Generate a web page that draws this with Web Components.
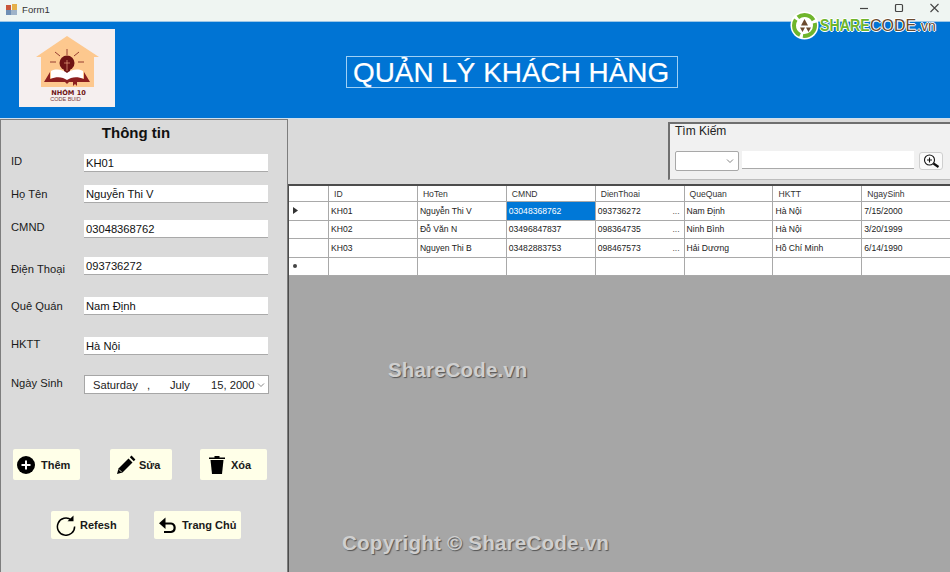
<!DOCTYPE html>
<html lang="vi">
<head>
<meta charset="utf-8">
<title>Form1</title>
<style>
  html, body { margin: 0; padding: 0; height: 572px; overflow: hidden; background: #dadada; }
  body { font-family: "Liberation Sans", Arial, sans-serif; color: #111; }
</style>
</head>
<body>
<app-window></app-window>
<script>
class WinTitlebar extends HTMLElement {
    constructor(){
        super()
        this.attachShadow({ mode: "open" })
    }
    connectedCallback(){
        this.shadowRoot.innerHTML = `
            <style>
            :host { display: flex; align-items: center; height: 22px; background: #eff5f2; border-bottom: 1px solid #9cc6e6; box-sizing: border-box; padding: 0 0 3px 6px; }
            .name { font-size: 9.5px; color: #333; margin-left: 5px; letter-spacing: .1px; }
            .ctl { margin-left: auto; display: flex; padding-right: 9px; gap: 23px; }
            svg { display: block; }
            </style>
            <svg width="11" height="11" viewBox="0 0 11 11">
              <rect x="0" y="1" width="5" height="5" fill="#c9563a"/>
              <rect x="6" y="0" width="5" height="6" fill="#e5b04a"/>
              <rect x="0" y="6" width="5" height="5" fill="#6f8fb5"/>
              <rect x="5" y="6" width="6" height="5" fill="#9fb3c9"/>
            </svg>
            <span class="name">Form1</span>
            <div class="ctl">
              <svg width="12" height="12" viewBox="0 0 12 12"><path d="M1 5.500h8" stroke="#444" stroke-width="1.200"/></svg>
              <svg width="12" height="12" viewBox="0 0 12 12"><rect x="1.500" y="1.500" width="7" height="7" rx="1" fill="none" stroke="#444" stroke-width="1.200"/></svg>
              <svg width="12" height="12" viewBox="0 0 12 12"><path d="M1.500 1L9.500 9M9.500 1L1.500 9" stroke="#444" stroke-width="1.100"/></svg>
            </div>
        `
    }
}

class AppHeader extends HTMLElement {
    constructor(){
        super()
        this.attachShadow({ mode: "open" })
    }
    connectedCallback(){
        this.shadowRoot.innerHTML = `
            <style>
            :host { display: flex; align-items: flex-start; height: 97px; background: #0074d4; border-bottom: 1px solid #cfe0ee; box-sizing: border-box; padding: 7px 0 0 19px; }
            .logo { width: 96px; height: 78px; background: #f5efef; position: relative; flex: none; }
            .logo svg { display: block; }
            .nhom, .code { position: absolute; left: 0; right: 0; text-align: center; white-space: nowrap; }
            .nhom { top: 60px; left: 3px; font: 700 6.600px/8px "DejaVu Sans", sans-serif; color: #6e1414; }
            .code { top: 67px; left: -3px; font: 5.500px/7px "Liberation Sans", sans-serif; color: #7c3a3a; }
            h1 { margin: 27px 0 0 231px; padding: 0 8px 0 6px; height: 32px; box-sizing: border-box; border: 1px solid #9fd0f5; font: 400 27.900px/31px "Liberation Sans", sans-serif; color: #fff; white-space: nowrap; -webkit-text-stroke: .2px #fff; }
            </style>
            <div class="logo">
              <svg width="96" height="78" viewBox="0 0 96 78">
                <path d="M17 28L48 7L80 28H75V58H22V28Z" fill="#fdc88e"/>
                <g stroke="#7b1a1a" stroke-width=".8">
                  <path d="M48 20v6M36 23l5 4M60 23l-5 4M31 33h6M59 33h6"/>
                </g>
                <circle cx="48" cy="34" r="7.500" fill="#6e1414"/>
                <rect x="45" y="40" width="6" height="5" fill="#6e1414"/>
                <path d="M48 31v11M45 34h6" stroke="#e8a080" stroke-width=".7"/>
                <path d="M32 42C38 39 44 41 48 44C52 41 58 39 64 42V51H32Z" fill="#fff"/>
                <path d="M31 43L25 53H46L48 55L50 53H71L65 43V50C58 47 52 48 48 51C44 48 38 47 31 50Z" fill="#8c1f1f"/>
                <path d="M54 49h4v8l-2-2l-2 2Z" fill="#8c1f1f"/>
              </svg>
              <span class="nhom">NHÓM 10</span>
              <span class="code">CODE BUID</span>
            </div>
            <h1>QUẢN LÝ KHÁCH HÀNG</h1>
        `
    }
}

class FormField extends HTMLElement {
    constructor(){
        super()
        this.attachShadow({ mode: "open" })
    }
    connectedCallback(){
        const gap = this.getAttribute("gap") || 0
        const lift = this.getAttribute("lift") || 0
        this.shadowRoot.innerHTML = `
            <style>
            :host { display: flex; align-items: center; height: 18px; margin-top: ${gap}px; padding-left: 11px; font-size: 11.200px; }
            .lbl { width: 73px; flex: none; color: #1a1a1a; transform: translateY(${lift}px); }
            .box { width: 184px; height: 18px; box-sizing: border-box; background: #fff; border-bottom: 1px solid #a9a9a9; padding: 3px 0 0 2px; font-size: 11.200px; color: #111; overflow: hidden; white-space: nowrap; }
            </style>
            <span class="lbl">${this.getAttribute("label")}</span>
            <div class="box"><slot></slot></div>
        `
    }
}

class DateField extends HTMLElement {
    constructor(){
        super()
        this.attachShadow({ mode: "open" })
    }
    connectedCallback(){
        this.shadowRoot.innerHTML = `
            <style>
            :host { display: flex; align-items: center; height: 19px; margin-top: 20px; padding-left: 11px; font-size: 11.200px; }
            .lbl { width: 73px; flex: none; color: #1a1a1a; transform: translateY(-2px); }
            .box { width: 185px; height: 19px; box-sizing: border-box; background: #fff; border: 1px solid #a6a6a6; display: flex; align-items: center; padding: 0 3px 0 8px; white-space: nowrap; color: #222; }
            .day { width: 54px; }
            .comma { width: 23px; }
            .month { width: 41px; }
            svg { margin-left: auto; }
            </style>
            <span class="lbl">Ngày Sinh</span>
            <div class="box"><span class="day">Saturday</span><span class="comma">,</span><span class="month">July</span><span>15, 2000</span>
              <svg width="8" height="6" viewBox="0 0 8 6"><path d="M1 1.500L4 4.500L7 1.500" fill="none" stroke="#777" stroke-width=".9"/></svg>
            </div>
        `
    }
}

const ICONS = {
    plus: `<svg width="18" height="18" viewBox="0 0 18 18"><circle cx="9" cy="9" r="9" fill="#000"/><path d="M9 4.500v9M4.500 9h9" stroke="#fff" stroke-width="2"/></svg>`,
    pencil: `<svg width="20" height="20" viewBox="0 0 20 20"><path d="M1 19L2.500 13.500L12.500 3.500L16.500 7.500L6.500 17.500Z" fill="#000"/><path d="M13.800 2.200L15.500 .6L19.400 4.500L17.800 6.200Z" fill="#000"/><path d="M3 14.500L5.500 17" stroke="#ffffe8" stroke-width=".8"/></svg>`,
    trash: `<svg width="16" height="19" viewBox="0 0 16 19"><path d="M1.500 5H14.500L13 19H3Z" fill="#000"/><path d="M0 2.500H5.500V1H10.500V2.500H16V4H0Z" fill="#000"/></svg>`,
    refresh: `<svg width="20" height="21" viewBox="0 0 20 21"><path d="M15.200 4.800A8.600 8.600 0 1 0 18.600 11.500" fill="none" stroke="#000" stroke-width="1.500"/><path d="M11.500 6.200H17.500V.5Z" fill="#000"/></svg>`,
    back: `<svg width="19" height="17" viewBox="0 0 19 17"><path d="M4 6.500H12A4.300 4.300 0 0 1 12 15H5" fill="none" stroke="#000" stroke-width="2.200"/><path d="M6.500 .5V12L0 6.300Z" fill="#000"/></svg>`
}

class ActionButton extends HTMLElement {
    constructor(){
        super()
        this.attachShadow({ mode: "open" })
    }
    connectedCallback(){
        const icon = ICONS[this.getAttribute("icon")]
        this.shadowRoot.innerHTML = `
            <style>
            :host { display: flex; align-items: center; gap: var(--gap, 5px); height: var(--h, 31px); width: var(--w, 66px); padding-left: var(--pad, 4px); background: #ffffe8; border-radius: 2px; box-sizing: border-box; font-size: 11px; font-weight: 700; color: #1a1a1a; white-space: nowrap; }
            svg { display: block; flex: none; }
            </style>
            ${icon}<slot></slot>
        `
    }
}

class InfoPanel extends HTMLElement {
    constructor(){
        super()
        this.attachShadow({ mode: "open" })
    }
    connectedCallback(){
        this.shadowRoot.innerHTML = `
            <style>
            :host { display: block; box-sizing: border-box; height: 453px; background: #dadada; border-top: 1px solid #7d7d7d; border-left: 1px solid #7d7d7d; border-right: 1px solid #7d7d7d; }
            h2 { margin: 4px 0 0; height: 17px; text-align: center; font: 700 15px/17px "Liberation Sans", sans-serif; color: #111; padding-right: 16px; }
            .fields { margin-top: 13px; margin-left: -1px; }
            .row { display: flex; }
            .row.one { margin: 55px 0 0 12px; gap: 30px; }
            .row.two { margin: 31px 0 0 50px; gap: 25px; }
            </style>
            <h2>Thông tin</h2>
            <div class="fields"><slot name="fields"></slot></div>
            <div class="row one"><slot name="one"></slot></div>
            <div class="row two"><slot name="two"></slot></div>
        `
    }
}

class SearchBox extends HTMLElement {
    constructor(){
        super()
        this.attachShadow({ mode: "open" })
    }
    connectedCallback(){
        this.shadowRoot.innerHTML = `
            <style>
            :host { display: block; box-sizing: border-box; width: 282px; height: 58px; margin: 3px 0 0 auto; background: #f1f1f1; border-top: 2px solid #6f6f6f; border-left: 2px solid #6f6f6f; border-bottom: 1px solid #bdbdbd; padding: 0 0 0 5px; }
            .t { font-size: 12px; color: #222; height: 27px; line-height: 15px; }
            .line { display: flex; align-items: flex-start; }
            .sel { width: 64px; height: 20px; box-sizing: border-box; background: #fff; border: 1px solid #a8a8a8; border-radius: 2px; display: flex; align-items: center; justify-content: flex-end; padding-right: 4px; }
            .txt { width: 172px; height: 18px; box-sizing: border-box; margin-left: 3px; background: #fff; border-bottom: 1px solid #a9a9a9; }
            .btn { width: 24px; height: 18px; box-sizing: border-box; margin: 1px 0 0 5px; background: #fafafa; border: 1px solid #cfcfcf; border-radius: 3px; display: flex; align-items: center; justify-content: center; }
            svg { display: block; }
            </style>
            <div class="t">Tìm Kiếm</div>
            <div class="line">
              <div class="sel"><svg width="8" height="6" viewBox="0 0 8 6"><path d="M1 1.500L4 4.500L7 1.500" fill="none" stroke="#777" stroke-width=".9"/></svg></div>
              <div class="txt"></div>
              <div class="btn">
                <svg width="17" height="14" viewBox="0 0 17 14">
                  <circle cx="6.500" cy="6" r="5" fill="#fff" stroke="#111" stroke-width="1.100"/>
                  <path d="M6.500 3.500v5M4 6h5" stroke="#111" stroke-width="1.100"/>
                  <path d="M10.500 9.500L15.500 13" stroke="#111" stroke-width="2.200"/>
                </svg>
              </div>
            </div>
        `
    }
}

const COLUMNS = ["ID", "HoTen", "CMND", "DienThoai", "QueQuan", "HKTT", "NgaySinh"]
const ROWS = [
    ["KH01", "Nguyễn Thi V", "03048368762", "093736272", "Nam Định", "Hà Nội", "7/15/2000"],
    ["KH02", "Đỗ Văn N", "03496847837", "098364735", "Ninh Bình", "Hà Nội", "3/20/1999"],
    ["KH03", "Nguyen Thi B", "03482883753", "098467573", "Hải Dương", "Hồ Chí Minh", "6/14/1990"]
]

class DataGrid extends HTMLElement {
    constructor(){
        super()
        this.attachShadow({ mode: "open" })
    }
    connectedCallback(){
        const head = COLUMNS.map(c => `<div class="c h">${c}</div>`).join("")
        const body = ROWS.map((row, r) => {
            const cells = row.map((v, i) => {
                const sel = r === 0 && i === 2 ? " sel" : ""
                const more = i === 3 ? `<span class="more">...</span>` : ""
                return `<div class="c${sel}">${v}${more}</div>`
            }).join("")
            const mark = r === 0 ? `<svg width="5" height="7" viewBox="0 0 5 7"><path d="M0 0L5 3.500L0 7Z" fill="#333"/></svg>` : ""
            return `<div class="row"><div class="c rh">${mark}</div>${cells}</div>`
        }).join("")
        const empty = COLUMNS.map(() => `<div class="c"></div>`).join("")
        this.shadowRoot.innerHTML = `
            <style>
            :host { display: block; flex: 1; background: #a6a6a6; border-top: 2px solid #4c4c4c; border-left: 1px solid #4c4c4c; box-sizing: border-box; overflow: hidden; font-size: 8.600px; color: #222; }
            .row { display: grid; grid-template-columns: 40px repeat(7, 88.900px); height: 18.500px; background: #fff; width: 663px; }
            .row.top { height: 16px; }
            .c { border-right: 1px solid #a9a9a9; border-bottom: 1px solid #a9a9a9; padding-left: 2px; display: flex; align-items: center; white-space: nowrap; overflow: hidden; box-sizing: border-box; position: relative; }
            .h { padding-left: 5px; color: #333; }
            .rh { padding-left: 4px; }
            .sel { background: #0078d7; color: #fff; }
            .more { position: absolute; right: 4px; color: #555; }
            .dot { width: 4px; height: 4px; border-radius: 50%; background: #444; }
            </style>
            <div class="row top"><div class="c"></div>${head}</div>
            ${body}
            <div class="row"><div class="c rh"><span class="dot"></span></div>${empty}</div>
        `
    }
}

class WaterMark extends HTMLElement {
    constructor(){
        super()
        this.attachShadow({ mode: "open" })
    }
    connectedCallback(){
        this.shadowRoot.innerHTML = `
            <style>
            :host { position: absolute; left: var(--x); top: var(--y); font: 700 var(--s)/1 "Liberation Sans", sans-serif; color: #cfcfcf; text-shadow: 1px 1px 1px #555; white-space: nowrap; letter-spacing: .2px; }
            </style>
            <slot></slot>
        `
    }
}

class ShareLogo extends HTMLElement {
    constructor(){
        super()
        this.attachShadow({ mode: "open" })
    }
    connectedCallback(){
        this.shadowRoot.innerHTML = `
            <style>
            :host { position: absolute; left: 790px; top: 11px; display: flex; align-items: center; gap: 1px; font: 700 16px/1 "Liberation Sans", sans-serif; white-space: nowrap; }
            svg { display: block; flex: none; }
            .t { display: flex; align-items: baseline; text-shadow: -1px 0 0 #fff, 1px 0 0 #fff, 0 -1px 0 #fff, 0 1px 0 #fff; margin-top: 1px; }
            .s { color: #6fb52c; width: 50px; }
            .s b { display: inline-block; font-weight: 700; transform: scaleX(.89); transform-origin: left center; }
            .c { color: #6b4a2e; font-weight: 400; width: 47px; }
            .v { color: #6b4a2e; font-weight: 400; font-size: 14px; }
            </style>
            <svg width="29" height="29" viewBox="0 0 29 29">
              <circle cx="14.500" cy="14.500" r="14" fill="#fff"/>
              <circle cx="14.500" cy="14.500" r="10.500" fill="none" stroke="#6fb52c" stroke-width="4" stroke-dasharray="18 3"/>
              <path d="M14.500 8L18 14.500L11 14.500Z M10 16.500H15L12.500 21Z M16 16.500H21L18.500 21Z" fill="#6b4a2e"/>
            </svg>
            <span class="t"><span class="s"><b>SHARE</b></span><span class="c">CODE</span><span class="v">.vn</span></span>
        `
    }
}

class AppWindow extends HTMLElement {
    constructor(){
        super()
        this.attachShadow({ mode: "open" })
    }
    connectedCallback(){
        this.shadowRoot.innerHTML = `
            <style>
            :host { display: block; position: relative; width: 950px; height: 572px; overflow: hidden; background: #dadada; }
            .body { display: grid; grid-template-columns: 288px 662px; height: 453px; }
            .right { display: flex; flex-direction: column; min-width: 0; }
            .gap { height: 65px; flex: none; }
            .b1 { --w: 67px; --gap: 6px; --pad: 4px; }
            .b2 { --w: 62px; --gap: 3px; --pad: 6px; }
            .b3 { --w: 67px; --gap: 6px; --pad: 9px; margin-left: -2px; }
            .b4 { --w: 78px; --h: 28px; --gap: 4px; --pad: 5px; }
            .b5 { --w: 87px; --h: 28px; --gap: 4px; --pad: 5px; }
            </style>
            <win-titlebar></win-titlebar>
            <app-header></app-header>
            <share-logo></share-logo>
            <div class="body">
              <info-panel>
                <form-field slot="fields" label="ID" gap="0" lift="-2">KH01</form-field>
                <form-field slot="fields" label="Họ Tên" gap="13" lift="0">Nguyễn Thi V</form-field>
                <form-field slot="fields" label="CMND" gap="17" lift="-2">03048368762</form-field>
                <form-field slot="fields" label="Điện Thoại" gap="19" lift="3">093736272</form-field>
                <form-field slot="fields" label="Quê Quán" gap="22" lift="0">Nam Định</form-field>
                <form-field slot="fields" label="HKTT" gap="22" lift="-2">Hà Nội</form-field>
                <date-field slot="fields"></date-field>
                <action-button slot="one" class="b1" icon="plus">Thêm</action-button>
                <action-button slot="one" class="b2" icon="pencil">Sửa</action-button>
                <action-button slot="one" class="b3" icon="trash">Xóa</action-button>
                <action-button slot="two" class="b4" icon="refresh">Refesh</action-button>
                <action-button slot="two" class="b5" icon="back">Trang Chủ</action-button>
              </info-panel>
              <div class="right">
                <div class="gap"><search-box></search-box></div>
                <data-grid></data-grid>
              </div>
            </div>
            <water-mark style="--x:388px;--y:360px;--s:20.400px">ShareCode.vn</water-mark>
            <water-mark style="--x:342px;--y:533px;--s:20.600px">Copyright © ShareCode.vn</water-mark>
        `
    }
}

customElements.define("win-titlebar", WinTitlebar)
customElements.define("app-header", AppHeader)
customElements.define("form-field", FormField)
customElements.define("date-field", DateField)
customElements.define("action-button", ActionButton)
customElements.define("info-panel", InfoPanel)
customElements.define("search-box", SearchBox)
customElements.define("data-grid", DataGrid)
customElements.define("water-mark", WaterMark)
customElements.define("share-logo", ShareLogo)
customElements.define("app-window", AppWindow)
</script>
</body>
</html>
